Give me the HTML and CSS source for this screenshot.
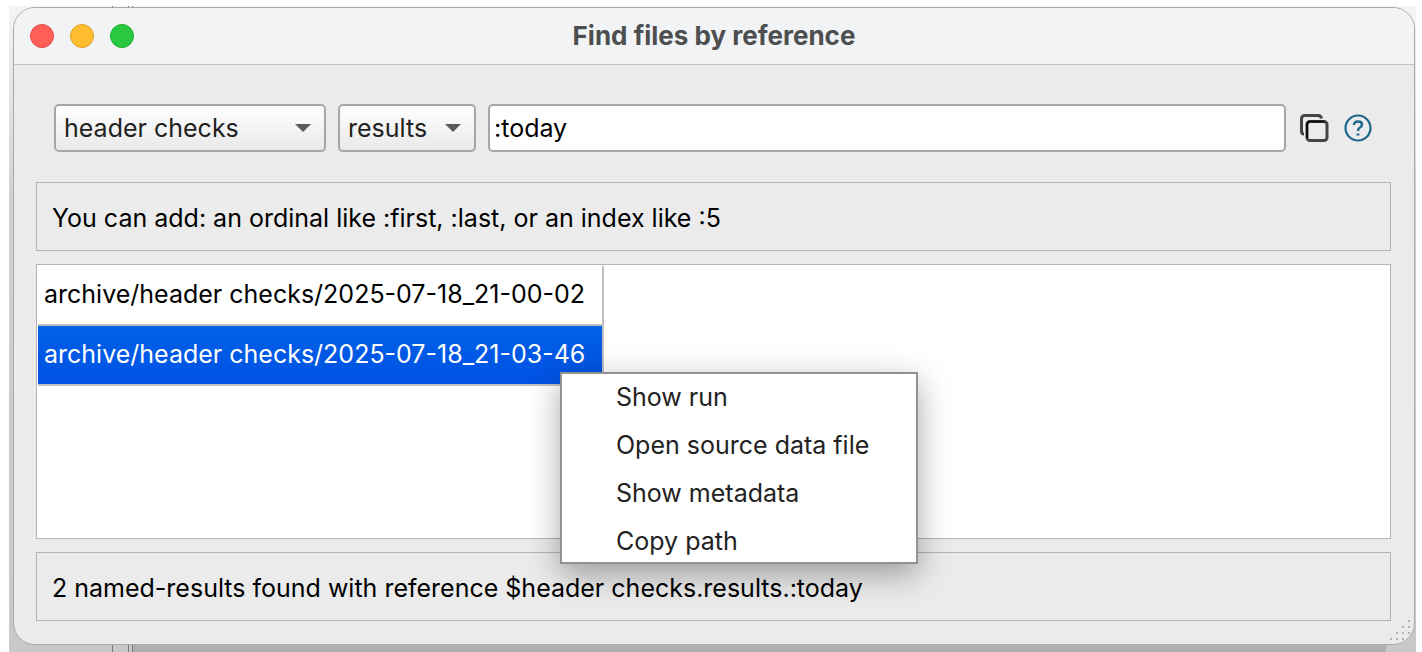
FILE: index.html
```html
<!DOCTYPE html>
<html lang="en">
<head>
    <meta charset="UTF-8">
    <meta name="viewport" content="width=device-width, initial-scale=1.0">
    <title>Find files by reference</title>
    <link rel="stylesheet" href="styles.css">
</head>
<body>
    <div class="desktop">
        <main class="window">
            <header class="titlebar">
                <div class="window-buttons">
                    <button type="button" class="dot close" aria-label="Close"></button>
                    <button type="button" class="dot minimize" aria-label="Minimize"></button>
                    <button type="button" class="dot maximize" aria-label="Maximize"></button>
                </div>
                <h1 class="title">Find files by reference</h1>
            </header>

            <div class="content">
                <form class="query">
                    <div class="combo combo-name">
                        <select aria-label="Named paths">
                            <option>header checks</option>
                        </select>
                    </div>
                    <div class="combo combo-type">
                        <select aria-label="Data type">
                            <option>results</option>
                        </select>
                    </div>
                    <input class="reference" type="text" value=":today" aria-label="Reference">
                    <div class="actions">
                        <button type="button" class="icon-button" aria-label="Copy">
                            <svg width="30" height="30" viewBox="0 0 30 30" fill="none" stroke-width="3">
                                <path d="M4 21Q1.500 21 1.500 18V6Q1.500 2.500 5 2.500H18Q21 2.500 21.500 5.500" stroke="#444"/>
                                <rect x="7" y="8.500" width="20" height="19" rx="3" stroke="#444"/>
                                <path d="M7 25V11.500Q7 8.500 10 8.500H24.500" stroke="#0c0c0c" stroke-width="2"/>
                            </svg>
                        </button>
                        <button type="button" class="icon-button" aria-label="Help">
                            <svg width="28" height="30" viewBox="0 0 28 30" fill="none" stroke="#1d668c">
                                <circle cx="14" cy="15" r="12.5" stroke-width="2.200"/>
                                <path d="M10 12Q10 8.500 14 8.500Q18 8.500 18 11.500Q18 13.500 16 14.500Q14 15.500 14 18" stroke-width="2.400"/>
                                <path d="M12.500 21.500H15.500" stroke-width="2.200"/>
                            </svg>
                        </button>
                    </div>
                </form>

                <p class="panel">You can add: an ordinal like :first, :last, or an index like :5</p>

                <section class="results">
                    <table class="files">
                        <tbody>
                            <tr><td>archive/header checks/2025-07-18_21-00-02</td></tr>
                            <tr class="selected"><td>archive/header checks/2025-07-18_21-03-46</td></tr>
                        </tbody>
                    </table>
                    <div class="context-menu" role="menu">
                        <button type="button" role="menuitem">Show run</button>
                        <button type="button" role="menuitem">Open source data file</button>
                        <button type="button" role="menuitem">Show metadata</button>
                        <button type="button" role="menuitem">Copy path</button>
                    </div>
                </section>

                <p class="panel">2 named-results found with reference $header checks.results.:today</p>
            </div>

            <svg class="grip" width="20" height="20" viewBox="0 0 20 20" fill="#b4b4b4" aria-hidden="true">
                <path d="M18 0h2v2h-2zM12 6h2v2h-2zM18 6h2v2h-2zM6 12h2v2h-2zM12 12h2v2h-2zM18 12h2v2h-2zM0 18h2v2h-2zM6 18h2v2h-2zM12 18h2v2h-2z"/>
            </svg>
        </main>
    </div>
</body>
</html>
```
FILE: styles.css
```css
* {
    margin: 0;
    padding: 0;
    box-sizing: border-box;
}

body {
    min-height: 100vh;
    display: flex;
    padding: 6px 6px 0 9px;
    background: #fff;
    font-family: Inter, "Liberation Sans", sans-serif;
    font-size: 25px;
    line-height: 32px;
    color: #000;
}

button,
select,
input {
    font: inherit;
    color: inherit;
}

.desktop {
    flex: 1;
    display: flex;
    padding: 1px 1px 7px 4px;
    /* edges of the window behind */
    background:
        linear-gradient(#777, #777) 103px 0 / 1px 100% no-repeat,
        linear-gradient(#777, #777) 119px 0 / 1px 100% no-repeat,
        linear-gradient(#777, #777) 123px 0 / 1px 100% no-repeat,
        linear-gradient(90deg, transparent 0, transparent 124px, #b0b0b0 124px, #b0b0b0 calc(100% - 30px), transparent calc(100% - 30px)) 0 100% / 100% 8px no-repeat,
        linear-gradient(#f4f4f4, #d0d0d0 30%, #c8c8c8);
}

.window {
    flex: 1;
    position: relative;
    display: flex;
    flex-direction: column;
    background: #ebebeb;
    border: 1px solid #aaa;
    border-radius: 22px;
    overflow: hidden;
}

/* Title bar */
.titlebar {
    display: grid;
    grid-template-columns: 1fr auto 1fr;
    align-items: center;
    height: 57px;
    padding: 0 16px;
    background: #f1f3f5;
    border-bottom: 1px solid #c2c2c2;
}

.window-buttons {
    display: flex;
    gap: 16px;
}

.dot {
    width: 24px;
    height: 24px;
    border: 1px solid;
    border-radius: 50%;
}

.close {
    background: #ff5f57;
    border-color: #e24b45;
}

.minimize {
    background: #febc2e;
    border-color: #dfa023;
}

.maximize {
    background: #28c840;
    border-color: #1dad2b;
}

.title {
    font-size: 26px;
    font-weight: 700;
    line-height: 32px;
    color: #4c4e4f;
}

/* Content */
.content {
    flex: 1;
    display: flex;
    flex-direction: column;
    gap: 13px;
    padding: 39px 23px 23px 22px;
}

.query {
    display: flex;
    gap: 12px;
    padding: 0 19px 17px 18px;
}

.combo {
    position: relative;
    height: 48px;
}

.combo-name {
    width: 272px;
}

.combo-type {
    width: 138px;
}

.combo select {
    appearance: none;
    width: 100%;
    height: 100%;
    padding: 0 8px;
    color: #222;
    background: linear-gradient(#fff, #e9e9e9);
    border: 2px solid #a6a6a6;
    border-radius: 5px;
}

.combo::after {
    content: '';
    position: absolute;
    top: 20px;
    right: 15px;
    border: 8px solid transparent;
    border-top-color: #5a5a5a;
    border-bottom: 0;
    pointer-events: none;
}

.reference {
    flex: 1;
    min-width: 0;
    height: 48px;
    padding: 0 4px;
    background: #fff;
    border: 2px solid #a6a6a6;
    border-radius: 5px;
    outline: none;
}

.actions {
    display: flex;
    align-items: center;
    gap: 14px;
    padding-left: 2px;
}

.icon-button {
    display: flex;
    background: none;
    border: 0;
}

.panel {
    padding: 19px 15px 16px;
    border: 1px solid #b4b4b4;
}

/* Results */
.results {
    flex: 1;
    position: relative;
    padding: 1px 0 0 1px;
    background: #fff;
    border: 1px solid #b4b4b4;
}

.files {
    min-width: 566px;
    border-collapse: separate;
    border-spacing: 0;
}

.files td {
    height: 60px;
    padding: 0 8px 2px 6px;
    white-space: nowrap;
    border-right: 2px solid #c0c0c0;
    border-bottom: 2px solid #c0c0c0;
}

.files .selected td {
    color: #fff;
    background: linear-gradient(#0060e8, #0052e4);
    background-clip: padding-box;
}

.context-menu {
    position: absolute;
    top: 107px;
    left: 523px;
    width: 358px;
    display: flex;
    flex-direction: column;
    gap: 16px;
    padding: 7px 0 5px;
    background: #fff;
    border: 2px solid #929292;
    box-shadow: 0 10px 30px rgba(0, 0, 0, 0.35);
}

.context-menu button {
    padding-left: 54px;
    text-align: left;
    color: #222;
    background: none;
    border: 0;
}

/* Resize grip */
.grip {
    position: absolute;
    right: 4px;
    bottom: 4px;
}
```
